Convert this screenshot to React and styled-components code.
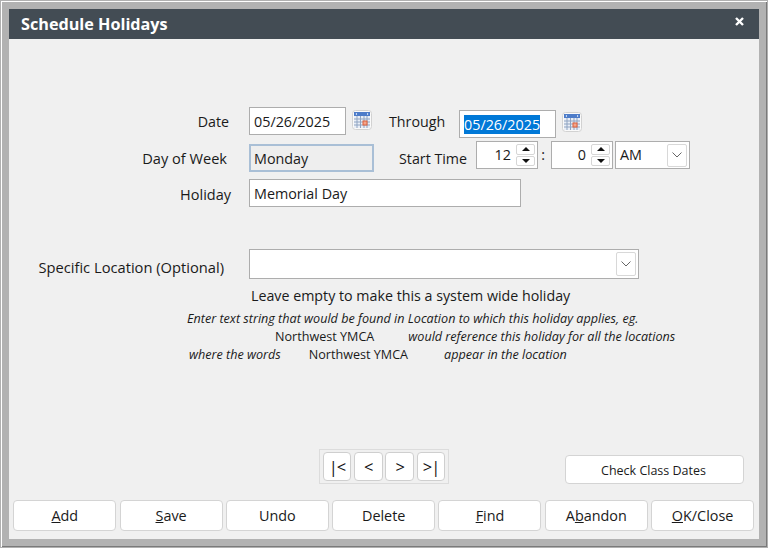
import React from "react";
import styled, { createGlobalStyle } from "styled-components";

const Global = createGlobalStyle`
	html, body {
		margin: 0;
		padding: 0;
		background: #f0f0f0;
	}
	* {
		box-sizing: border-box;
	}
`;

const Frame = styled.div`
	width: 768px;
	height: 548px;
	padding: 8px;
	background: #b2b2b2;
	border: 1px solid #b0b0b0;
	box-shadow: inset 1px 1px 0 #fff, inset -1px -1px 0 #7a7a7a;
	display: flex;
	flex-direction: column;
	font-family: "Open Sans", "Noto Sans", sans-serif;
	font-size: 14.25px;
	color: #1a1a1a;
`;

const TitleBar = styled.div`
	height: 30px;
	flex: none;
	background: #434c54;
	color: #fff;
	display: flex;
	align-items: center;
	justify-content: space-between;
	padding: 0 15px 0 12px;
	font-size: 16.2px;
	font-weight: 700;
`;

const Body = styled.div`
	flex: 1;
	background: #f0f0f0;
	display: flex;
	flex-direction: column;
	padding: 68px 4px 8px 4px;
`;

const Row = styled.div`
	display: flex;
	align-items: flex-start;
	margin-top: ${(p) => p.$top || 0}px;
`;

const Label = styled.label`
	width: ${(p) => p.$width || 216}px;
	flex: none;
	text-align: right;
	line-height: 20px;
	font-size: ${(p) => p.$size || 14.25}px;
	white-space: nowrap;
	margin-top: ${(p) => p.$top || 4}px;
	margin-left: ${(p) => p.$left || 0}px;
`;

const Field = styled.div`
	width: ${(p) => p.$width}px;
	height: ${(p) => p.$height || 28}px;
	flex: none;
	margin-top: ${(p) => p.$top || 0}px;
	margin-left: ${(p) => p.$left || 0}px;
	background: ${(p) => (p.$readOnly ? "#eeeeee" : "#fff")};
	border: ${(p) => (p.$readOnly ? "2px solid #a9bfd6" : "1px solid #adadad")};
	padding: 1px 0 0 ${(p) => (p.$readOnly ? 3 : 4)}px;
	display: flex;
	align-items: center;
	line-height: 20px;
	font-size: 14.35px;
`;

const Combo = styled(Field)`
	padding-top: 0;
`;

const Selected = styled.span`
	background: #0078d7;
	color: #fff;
	line-height: 19px;
`;

const CalendarButton = styled.div`
	width: 20px;
	height: 20px;
	flex: none;
	margin-left: ${(p) => p.$left}px;
	margin-top: ${(p) => p.$top}px;
	display: flex;
`;

const Spin = styled(Field)`
	justify-content: flex-end;
	padding: 0 2px 0 0;
`;

const SpinValue = styled.span`
	margin-right: 5px;
`;

const SpinButtons = styled.div`
	width: 19px;
	height: 100%;
	padding: 2px 0;
	display: flex;
	flex-direction: column;
	gap: 1px;
`;

const SpinButton = styled.div`
	flex: 1;
	background: #fff;
	border: 1px solid #d6d6d6;
	border-radius: 2px;
	display: flex;
	align-items: center;
	justify-content: center;
`;

const Colon = styled.span`
	width: 13px;
	flex: none;
	padding-right: 3px;
	text-align: center;
	line-height: 20px;
	margin-top: 4px;
`;

const DropButton = styled.div`
	width: 20px;
	height: ${(p) => p.$size || 23}px;
	border: 1px solid #d8d8d8;
	border-radius: 2px;
	background: #fff;
	margin-left: auto;
	margin-right: 2px;
	display: flex;
	align-items: center;
	justify-content: center;
`;

const Hint = styled.div`
	padding-left: ${(p) => p.$left || 0}px;
	line-height: 18px;
	font-size: 12.6px;
	font-style: italic;
	white-space: nowrap;
`;

const HintPlain = styled.span`
	font-style: normal;
	margin-left: ${(p) => p.$before || 0}px;
	margin-right: ${(p) => p.$after || 0}px;
`;

const EmptyNote = styled.div`
	margin: 7px 0 4px 238px;
	line-height: 20px;
`;

const Footer = styled.div`
	margin-top: auto;
	display: flex;
	align-items: flex-start;
	margin-bottom: 16px;
`;

const NavGroup = styled.div`
	margin-left: 306px;
	width: 130px;
	height: 35px;
	border: 1px solid #dcdcdc;
	padding: 2px 3px;
	display: flex;
	justify-content: space-between;
`;

const NavButton = styled.button`
	width: ${(p) => p.$width}px;
	height: 29px;
	padding: 0;
	border: 1px solid #cfcfcf;
	border-radius: 4px;
	background: #fff;
	color: #111;
	font: inherit;
	font-size: 16.5px;
	letter-spacing: -1px;
	display: flex;
	align-items: center;
	justify-content: center;
`;

const CheckButton = styled.button`
	margin-left: 116px;
	margin-top: 6px;
	width: 179px;
	height: 29px;
	padding: 1px 2px 0 0;
	border: 1px solid #d4d4d4;
	border-radius: 4px;
	background: #fff;
	color: #1a1a1a;
	font: inherit;
	font-size: 12.5px;
`;

const ActionBar = styled.div`
	display: grid;
	grid-template-columns: repeat(7, 103px);
	column-gap: 3.3px;
	margin-left: 0.3px;
`;

const ActionButton = styled.button`
	height: 31px;
	padding: 0;
	border: 1px solid #d4d4d4;
	border-radius: 4px;
	background: #fff;
	color: #1a1a1a;
	font: inherit;
	font-size: 14.4px;
`;

const CloseSvg = styled.svg`
	margin-bottom: 6px;
`;

const CalendarIcon = () => (
	<svg width="20" height="20" viewBox="0 0 20 20">
		<rect x="0.5" y="0.5" width="19" height="19" rx="3" fill="#fafafa" stroke="#d2d2d2" />
		<rect x="2" y="2" width="16" height="4" fill="#4d7cc9" />
		<path d="M5 3v2L3.500 4zM15 3v2l1.500-1z" fill="#fff" />
		<rect x="2" y="6" width="16" height="12" fill="#e9eef6" />
		<path d="M2 9h16M2 12h16M2 15h16M5 6v12M8.500 6v12M12 6v12M15 6v12" stroke="#8fa4c2" strokeWidth="1" />
		<rect x="11" y="11" width="4" height="4" fill="#f0a58c" stroke="#e0603a" />
	</svg>
);

const ArrowIcon = ({ down }) => (
	<svg width="8" height="4" viewBox="0 0 8 4">
		<path d={down ? "M0 0h8L4 4z" : "M4 0L8 4H0z"} fill="#111" />
	</svg>
);

const ChevronIcon = () => (
	<svg width="10" height="6" viewBox="0 0 10 6">
		<path d="M0.500 0.500L5 5l4.500-4.500" fill="none" stroke="#666" />
	</svg>
);

const CloseIcon = () => (
	<CloseSvg width="9" height="9" viewBox="0 0 9 9">
		<path d="M1 1l7 7M8 1L1 8" stroke="#fff" strokeWidth="2.400" />
	</CloseSvg>
);

const SpinBox = ({ value, left }) => (
	<Spin $width={62} $left={left}>
		<SpinValue>{value}</SpinValue>
		<SpinButtons>
			<SpinButton>
				<ArrowIcon />
			</SpinButton>
			<SpinButton>
				<ArrowIcon down />
			</SpinButton>
		</SpinButtons>
	</Spin>
);

const actions = [
	["A", "dd"],
	["S", "ave"],
	["", "Undo"],
	["", "Delete"],
	["F", "ind"],
	["A", "b", "andon"],
	["O", "K/Close"],
];

const App = () => {
	return (
		<>
			<Global />
			<Frame>
				<TitleBar>
					Schedule Holidays
					<CloseIcon />
				</TitleBar>
				<Body>
					<Row>
						<Label $top={5}>Date</Label>
						<Field $width={97} $left={20}>05/26/2025</Field>
						<CalendarButton $left={6} $top={3}>
							<CalendarIcon />
						</CalendarButton>
						<Label $width={55} $left={17} $top={5}>Through</Label>
						<Field $width={97} $left={15} $top={3}>
							<Selected>05/26/2025</Selected>
						</Field>
						<CalendarButton $left={6} $top={5}>
							<CalendarIcon />
						</CalendarButton>
					</Row>
					<Row $top={3}>
						<Label $width={214} $top={7} $size={14.6}>Day of Week</Label>
						<Field $width={125} $left={22} $top={3} $readOnly>Monday</Field>
						<Label $width={68} $left={25} $top={8}>Start Time</Label>
						<SpinBox value="12" left={9} />
						<Colon>:</Colon>
						<SpinBox value="0" />
						<Combo $width={75} $left={2}>
							AM
							<DropButton>
								<ChevronIcon />
							</DropButton>
						</Combo>
					</Row>
					<Row $top={7}>
						<Label $width={218} $top={6} $size={14.5}>Holiday</Label>
						<Field $width={272} $left={18}>Memorial Day</Field>
					</Row>
					<Row $top={42}>
						<Label $width={211} $top={8} $size={14.7}>Specific Location (Optional)</Label>
						<Combo $width={390} $height={30} $left={25}>
							<DropButton $size={24}>
								<ChevronIcon />
							</DropButton>
						</Combo>
					</Row>
					<EmptyNote>Leave empty to make this a system wide holiday</EmptyNote>
					<Hint $left={174}>Enter text string that would be found in Location to which this holiday applies, eg.</Hint>
					<Hint $left={262}><HintPlain $after={34}>Northwest YMCA</HintPlain>would reference this holiday for all the locations</Hint>
					<Hint $left={176}>where the words<HintPlain $before={28} $after={36}>Northwest YMCA</HintPlain>appear in the location</Hint>
					<Footer>
						<NavGroup>
							<NavButton $width={28}>|&lt;</NavButton>
							<NavButton $width={29}>&lt;</NavButton>
							<NavButton $width={29}>&gt;</NavButton>
							<NavButton $width={28}>&gt;|</NavButton>
						</NavGroup>
						<CheckButton>Check Class Dates</CheckButton>
					</Footer>
					<ActionBar>
						{actions.map((a) => (
							<ActionButton key={a.join("")}>
								{a.length === 3 ? (
									<>{a[0]}<u>{a[1]}</u>{a[2]}</>
								) : (
									<><u>{a[0]}</u>{a[1]}</>
								)}
							</ActionButton>
						))}
					</ActionBar>
				</Body>
			</Frame>
		</>
	);
};

export default App;
